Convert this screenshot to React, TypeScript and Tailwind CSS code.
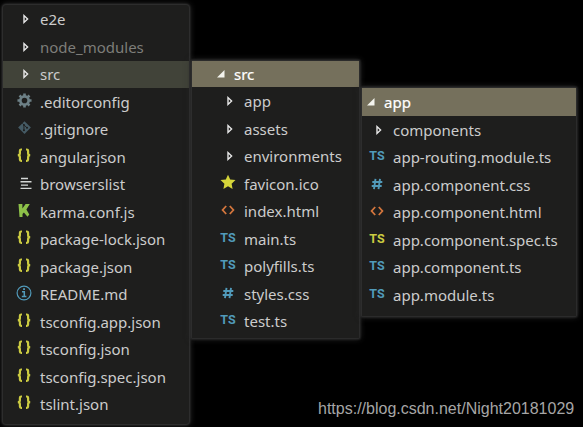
import type { ReactNode } from "react";
import clsx from "clsx";

type IconName =
  | "folder"
  | "gear"
  | "git"
  | "json"
  | "lines"
  | "karma"
  | "info"
  | "star"
  | "html"
  | "ts"
  | "spec"
  | "css";

type Entry = {
  name: string;
  icon: IconName;
  muted?: boolean;
  active?: boolean;
};

const rootEntries: Entry[] = [
  { name: "e2e", icon: "folder" },
  { name: "node_modules", icon: "folder", muted: true },
  { name: "src", icon: "folder", active: true },
  { name: ".editorconfig", icon: "gear" },
  { name: ".gitignore", icon: "git" },
  { name: "angular.json", icon: "json" },
  { name: "browserslist", icon: "lines" },
  { name: "karma.conf.js", icon: "karma" },
  { name: "package-lock.json", icon: "json" },
  { name: "package.json", icon: "json" },
  { name: "README.md", icon: "info" },
  { name: "tsconfig.app.json", icon: "json" },
  { name: "tsconfig.json", icon: "json" },
  { name: "tsconfig.spec.json", icon: "json" },
  { name: "tslint.json", icon: "json" },
];

const srcEntries: Entry[] = [
  { name: "app", icon: "folder" },
  { name: "assets", icon: "folder" },
  { name: "environments", icon: "folder" },
  { name: "favicon.ico", icon: "star" },
  { name: "index.html", icon: "html" },
  { name: "main.ts", icon: "ts" },
  { name: "polyfills.ts", icon: "ts" },
  { name: "styles.css", icon: "css" },
  { name: "test.ts", icon: "ts" },
];

const appEntries: Entry[] = [
  { name: "components", icon: "folder" },
  { name: "app-routing.module.ts", icon: "ts" },
  { name: "app.component.css", icon: "css" },
  { name: "app.component.html", icon: "html" },
  { name: "app.component.spec.ts", icon: "spec" },
  { name: "app.component.ts", icon: "ts" },
  { name: "app.module.ts", icon: "ts" },
];

export default function App() {
  return (
    <div className="relative flex h-[427px] w-[583px] items-start gap-[3px] overflow-hidden bg-black pl-[3px] font-['Noto_Sans','Open_Sans',sans-serif] text-[15px] text-[#cccccc]">
      <Panel className="mt-[5px] h-[419px] w-[186px] rounded-[3px] pt-[0.5px]">
        <FileList entries={rootEntries} indent="pl-[7px]" />
      </Panel>

      <Panel className="mt-[61px] h-[277px] w-[167px]">
        <PanelHeader className="h-[26px] gap-[9px] pl-[24px]">src</PanelHeader>
        <FileList entries={srcEntries} indent="pl-[22px]" className="pt-[0.5px]" />
      </Panel>

      <Panel className="mt-[88px] h-[228px] w-[214px]">
        <PanelHeader className="h-[28px] gap-[9px] pl-[4px]">app</PanelHeader>
        <FileList entries={appEntries} indent="pl-px" />
      </Panel>

      <div className="absolute bottom-[8px] left-[318px] font-['Liberation_Sans',Arial,sans-serif] text-[16px] leading-[20px] whitespace-nowrap text-[#a6a6a6]">
        https://blog.csdn.net/Night20181029
      </div>
    </div>
  );
}

function Panel({ className, children }: { className: string; children: ReactNode }) {
  return (
    <section
      className={clsx(
        "shrink-0 bg-[#1e1e1d] shadow-[0_0_2px_1px_#363636,0_0_6px_1px_#2c2c2c]",
        className,
      )}
    >
      {children}
    </section>
  );
}

function PanelHeader({ className, children }: { className: string; children: ReactNode }) {
  return (
    <div className={clsx("flex items-center bg-[#75705c] text-white", className)}>
      <svg className="mt-[-2px] size-[9px]" viewBox="0 0 9 9">
        <path d="M8.5 1v7.5H1z" fill="#f3f3ed" />
      </svg>
      <span className="[-webkit-text-stroke:0.2px_white]">{children}</span>
    </div>
  );
}

type FileListProps = {
  entries: Entry[];
  indent: string;
  className?: string;
};

function FileList({ entries, indent, className }: FileListProps) {
  return (
    <ul className={className}>
      {entries.map((entry) => (
        <li
          key={entry.name}
          className={clsx(
            "flex h-[27.5px] items-center gap-[2px] whitespace-nowrap",
            indent,
            entry.active && "bg-[#414339]",
            entry.muted && "text-[#7d7d79]",
          )}
        >
          <span className="flex w-[28px] shrink-0 justify-center">
            <FileIcon name={entry.icon} />
          </span>
          <span>{entry.name}</span>
        </li>
      ))}
    </ul>
  );
}

function FileIcon({ name }: { name: IconName }) {
  switch (name) {
    case "folder":
      return (
        <svg className="ml-[4px] size-[10px]" viewBox="0 0 10 10">
          <path d="M3 1.6v6.8L6.6 5z" fill="none" stroke="#e8e8e8" strokeWidth="1.4" />
        </svg>
      );
    case "ts":
    case "spec":
      return (
        <span
          className={clsx(
            "mt-[-2px] font-['Roboto',sans-serif] text-[12.5px] leading-none font-bold",
            name === "ts" ? "text-[#519aba]" : "text-[#cbcb41]",
          )}
        >
          TS
        </span>
      );
    case "css":
      return (
        <svg className="mt-[-2px] size-[14px]" viewBox="0 0 14 14">
          <path
            d="M5.5 1.8 4 12.2M10 1.8 8.5 12.2M2.3 5h10M1.7 9h10"
            fill="none"
            stroke="#519aba"
            strokeWidth="1.9"
          />
        </svg>
      );
    case "json":
      return (
        <svg className="mt-[-3px] h-[15px] w-[16px]" viewBox="0 0 16 15">
          <path
            d="M6 1.5H5.2Q3.9 1.5 3.9 2.8V5.2Q3.9 7 1.9 7.2Q3.9 7.4 3.9 9.2V11.6Q3.9 12.9 5.2 12.9H6M10 1.5h.8Q12.1 1.5 12.1 2.8V5.2Q12.1 7 14.1 7.2Q12.1 7.4 12.1 9.2V11.6Q12.1 12.9 10.8 12.9H10"
            fill="none"
            stroke="#cbcb41"
            strokeWidth="2.2"
          />
        </svg>
      );
    case "html":
      return (
        <svg className="mt-[-3px] size-[14px]" viewBox="0 0 14 14">
          <path
            d="M5.2 3 1.6 7l3.6 4M8.8 3l3.6 4-3.6 4"
            fill="none"
            stroke="#d4763d"
            strokeWidth="1.8"
          />
        </svg>
      );
    case "star":
      return (
        <svg className="mt-[-3px] size-[16px]" viewBox="0 0 16 16">
          <path
            d="m8 .7 2.2 4.8 5.3.6-3.9 3.6 1 5.2L8 12.3l-4.6 2.6 1-5.2L.5 6.1l5.3-.6z"
            fill="#d5d53a"
          />
        </svg>
      );
    case "gear":
      return (
        <svg className="mt-[-3px] size-[15px]" viewBox="0 0 16 16">
          <g fill="none" stroke="#6d8086">
            <circle cx="8" cy="8" r="4.4" strokeWidth="2.8" />
            <path
              d="M8 .5v2.8M8 12.7v2.8M.5 8h2.8M12.7 8h2.8M2.7 2.7l2 2M11.3 11.3l2 2M13.3 2.7l-2 2M4.7 11.3l-2 2"
              strokeWidth="2.8"
            />
          </g>
        </svg>
      );
    case "git":
      return (
        <svg className="mt-[-3px] size-[15px]" viewBox="0 0 16 16">
          <path d="m8 1.2 6.8 6.8L8 14.8 1.2 8z" fill="#455b65" />
          <path d="M5.8 3.6 7.4 5.2V11M7.6 5.4l3 2.9" stroke="#1e1e1d" fill="none" />
          <circle cx="7.4" cy="5.2" r="1" fill="#1e1e1d" />
          <circle cx="7.4" cy="11" r="1.1" fill="#1e1e1d" />
          <circle cx="10.7" cy="8.3" r="1.1" fill="#1e1e1d" />
        </svg>
      );
    case "lines":
      return (
        <svg className="mt-[-2px] ml-[4px] h-[13px] w-[12px]" viewBox="0 0 12 13">
          <path
            d="M1 1.5h7M.5 4.8h11M1 8.1h7M.5 11.4h11"
            stroke="#d4d7d6"
            strokeWidth="1.4"
          />
        </svg>
      );
    case "karma":
      return (
        <svg className="mt-[-3px] h-[15px] w-[14px]" viewBox="0 0 14 15">
          <path
            d="M1.5 1h3.9v4.6L8.6 1h4.2L9.4 6.4l2.9 5.1-1.8 2.3L6.9 9.4l-1.4 1.5V14H2.5z"
            fill="#8dc149"
          />
        </svg>
      );
    case "info":
      return (
        <svg className="mt-[-3px] size-[16px]" viewBox="0 0 16 16">
          <circle cx="8" cy="8" r="6.9" fill="none" stroke="#519aba" strokeWidth="1.2" />
          <path d="M6 6.7h2.3v4.7M5.8 11.6h4.6" fill="none" stroke="#519aba" strokeWidth="1.5" />
          <path d="M7.1 3.2h1.9v1.9H7.1z" fill="#519aba" />
        </svg>
      );
  }
}
